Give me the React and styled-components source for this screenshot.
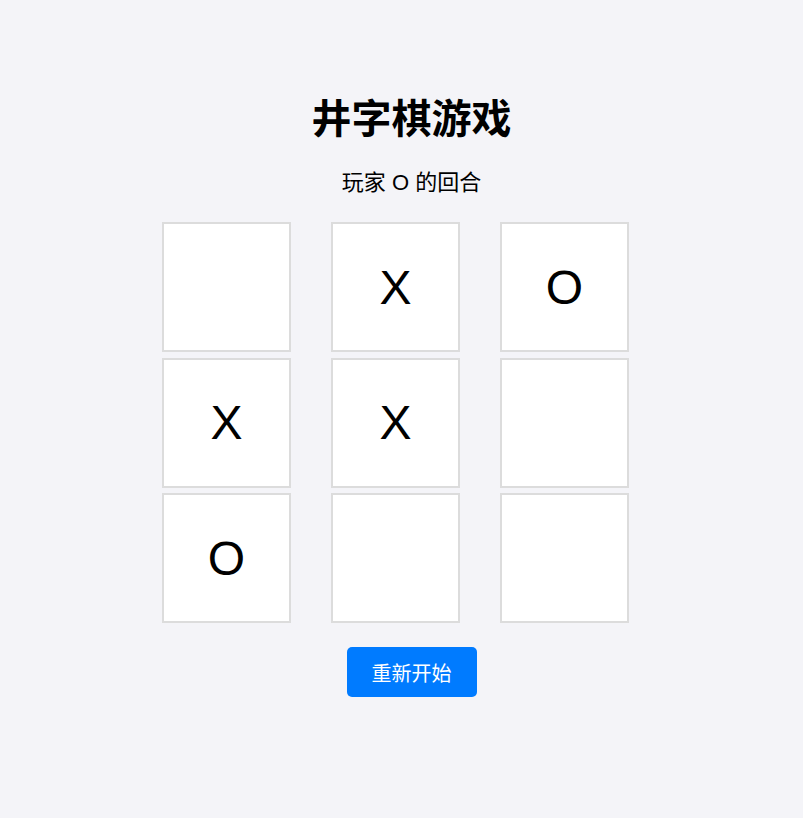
import React, { useState } from "react";
import styled, { createGlobalStyle } from "styled-components";

const GlobalStyle = createGlobalStyle`
  html, body {
    margin: 0;
    padding: 0;
    background: #f4f4f8;
  }
  body {
    font-family: "Liberation Sans", "Noto Sans CJK SC", sans-serif;
    color: #000;
  }
`;

const Page = styled.div`
  min-height: 818px;
  box-sizing: border-box;
  padding: 94px 0 0 20px;
  display: flex;
  flex-direction: column;
  align-items: center;
`;

const Title = styled.h1`
  margin: 0;
  font-family: "Noto Sans CJK SC", sans-serif;
  font-size: 40px;
  font-weight: 700;
  line-height: 44px;
`;

const Status = styled.p`
  margin: 32px 0 0;
  font-family: "Liberation Sans", "Noto Sans CJK SC", sans-serif;
  font-size: 22px;
  line-height: 26px;
`;

const Board = styled.div`
  margin: 26px 0 0 3px;
  display: grid;
  grid-template-columns: repeat(3, 164px);
  grid-auto-rows: 130px;
  row-gap: 5.5px;
  column-gap: 5px;
`;

const Cell = styled.button`
  width: 129px;
  height: 130px;
  box-sizing: border-box;
  padding: 0;
  background: #fff;
  border: 2px solid #dcdcdc;
  font-family: "Liberation Sans", sans-serif;
  font-size: 48px;
  color: #000;
  cursor: pointer;
  display: flex;
  align-items: center;
  justify-content: center;
`;

const ResetButton = styled.button`
  margin-top: 24px;
  width: 130px;
  height: 50px;
  border: none;
  border-radius: 5px;
  background: #007bff;
  color: #fff;
  font-family: "Noto Sans CJK SC", sans-serif;
  font-size: 20px;
  cursor: pointer;
`;

const initial = ["", "X", "O", "X", "X", "", "O", "", ""];

export default function App() {
  const [cells, setCells] = useState(initial);
  const [turn, setTurn] = useState("O");

  const play = (i) => {
    if (cells[i]) return;
    const next = cells.slice();
    next[i] = turn;
    setCells(next);
    setTurn(turn === "X" ? "O" : "X");
  };

  const reset = () => {
    setCells(Array(9).fill(""));
    setTurn("X");
  };

  return (
    <>
      <GlobalStyle />
      <Page>
        <Title>井字棋游戏</Title>
        <Status>玩家 {turn} 的回合</Status>
        <Board>
          {cells.map((v, i) => (
            <Cell key={i} onClick={() => play(i)}>
              {v}
            </Cell>
          ))}
        </Board>
        <ResetButton onClick={reset}>重新开始</ResetButton>
      </Page>
    </>
  );
}
